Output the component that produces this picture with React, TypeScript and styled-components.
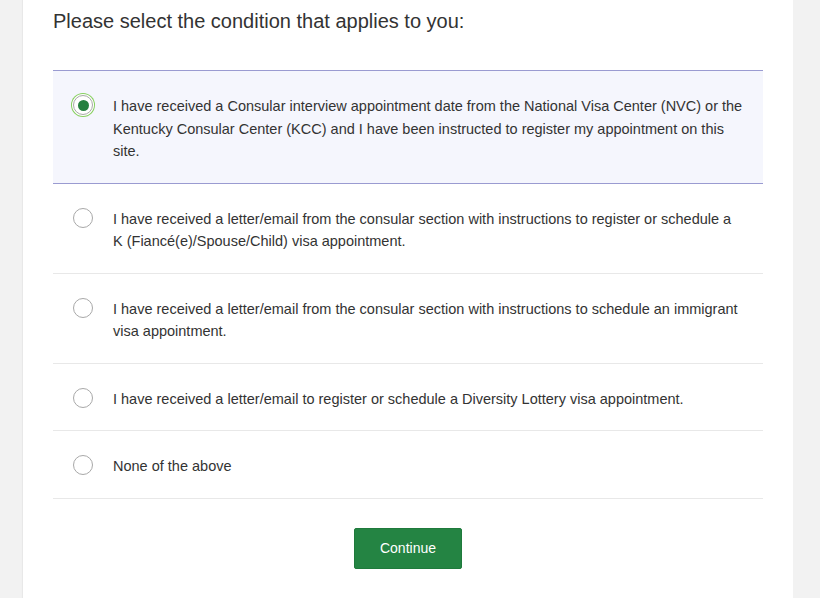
import React, { useState } from 'react';
import styled, { createGlobalStyle } from 'styled-components';

const GlobalStyle = createGlobalStyle`
  html, body {
    margin: 0;
    padding: 0;
    background: #f2f2f2;
    font-family: "Liberation Sans", Arial, sans-serif;
    color: #333333;
  }
`;

const Page = styled.div`
  min-height: 598px;
  padding-left: 23px;
`;

const Card = styled.div`
  width: 770px;
  min-height: 598px;
  background: #ffffff;
  box-shadow: -1px 0 1px rgba(0, 0, 0, 0.04);
  padding: 10px 30px 0;
  box-sizing: border-box;
`;

const Heading = styled.h1`
  margin: 0 0 37px;
  font-size: 20px;
  line-height: 23px;
  font-weight: normal;
  color: #333333;
`;

const Options = styled.div`
  display: flex;
  flex-direction: column;
`;

const Option = styled.label<{ selected?: boolean }>`
  display: flex;
  align-items: flex-start;
  padding: 24px 19.5px 20px 20px;
  background: ${p => (p.selected ? '#f5f6fd' : '#ffffff')};
  border-top: ${p => (p.selected ? '1px solid #9a9bd1' : 'none')};
  border-bottom: 1px solid ${p => (p.selected ? '#9a9bd1' : '#e8e8e8')};
  cursor: pointer;
`;

const Radio = styled.span<{ checked?: boolean }>`
  flex: none;
  width: 20px;
  height: 20px;
  margin-right: 20px;
  border-radius: 50%;
  border: 1px solid #a8a8a8;
  box-sizing: border-box;
  background: #ffffff;
  display: flex;
  align-items: center;
  justify-content: center;
  box-shadow: ${p => (p.checked ? '0 0 0 1px #ffffff, 0 0 0 2px #86cf5f' : 'none')};

  &::after {
    content: '';
    width: 11px;
    height: 11px;
    border-radius: 50%;
    background: #25803f;
    display: ${p => (p.checked ? 'block' : 'none')};
  }
`;

const OptionText = styled.span`
  font-size: 14.5px;
  line-height: 22.5px;
  color: #333333;
`;

const Actions = styled.div`
  display: flex;
  justify-content: center;
  padding-top: 29px;
`;

const ContinueButton = styled.button`
  background: #248443;
  color: #ffffff;
  border: 1px solid #1f7a3c;
  border-radius: 2px;
  font-family: "Liberation Sans", Arial, sans-serif;
  font-size: 14px;
  line-height: 17px;
  padding: 11px 25px;
  cursor: pointer;
`;

const conditions = [
  'I have received a Consular interview appointment date from the National Visa Center (NVC) or the Kentucky Consular Center (KCC) and I have been instructed to register my appointment on this site.',
  'I have received a letter/email from the consular section with instructions to register or schedule a K (Fiancé(e)/Spouse/Child) visa appointment.',
  'I have received a letter/email from the consular section with instructions to schedule an immigrant visa appointment.',
  'I have received a letter/email to register or schedule a Diversity Lottery visa appointment.',
  'None of the above',
];

export default function App() {
  const [selected, setSelected] = useState(0);

  return (
    <Page>
      <GlobalStyle />
      <Card>
        <Heading>Please select the condition that applies to you:</Heading>
        <Options>
          {conditions.map((text, i) => (
            <Option key={i} selected={selected === i} onClick={() => setSelected(i)}>
              <Radio checked={selected === i} />
              <OptionText>{text}</OptionText>
            </Option>
          ))}
        </Options>
        <Actions>
          <ContinueButton>Continue</ContinueButton>
        </Actions>
      </Card>
    </Page>
  );
}
